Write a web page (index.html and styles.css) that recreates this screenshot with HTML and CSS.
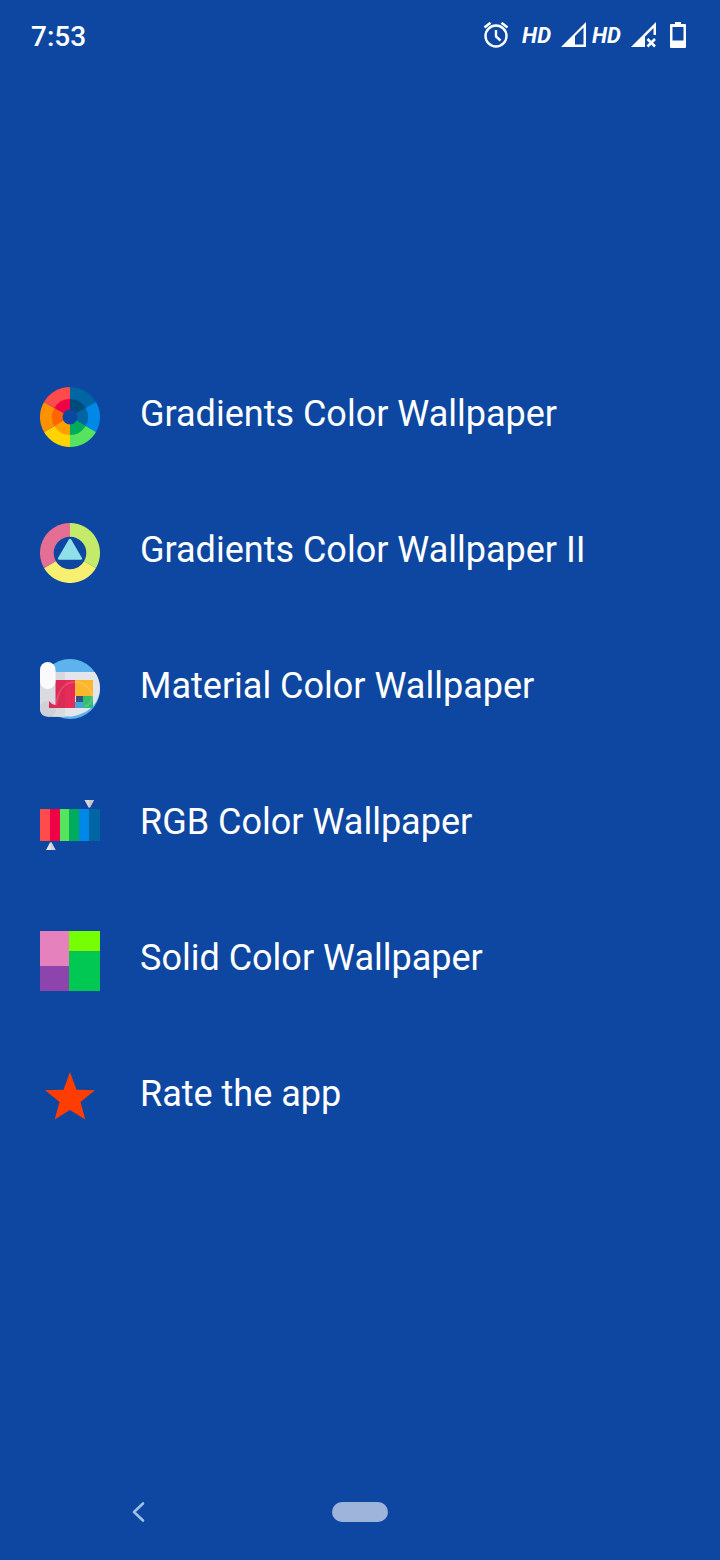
FILE: index.html
```html
<!DOCTYPE html>
<html lang="en">
<head>
  <meta charset="UTF-8">
  <meta name="viewport" content="width=device-width, initial-scale=1.0">
  <title>Color Wallpaper</title>
  <link rel="stylesheet" href="styles.css">
</head>
<body>
  <header class="status-bar">
    <span class="clock">7:53</span>
    <div class="status-icons">
      <svg class="alarm" width="28" height="28" viewBox="0 0 28 28" fill="none" stroke="#fff">
        <circle cx="14" cy="15" r="10.500" stroke-width="2.400"/>
        <path d="M14 9v6.500l4.500 4" stroke-width="2.400"/>
        <path d="M2.500 6.500l6-4.800M25.500 6.500l-6-4.800" stroke-width="2.600"/>
      </svg>
      <span class="hd">HD</span>
      <svg class="signal" width="26" height="26" viewBox="0 0 26 26">
        <path d="M0 25L25 0v25z" fill="#fff"/>
        <path d="M14 14L22.500 5.500v17H14z" fill="#0d47a1"/>
      </svg>
      <span class="hd">HD</span>
      <svg class="signal" width="26" height="26" viewBox="0 0 26 26">
        <path d="M0 25L25 0v13h-2.500V6L14 14.500V25z" fill="#fff"/>
        <path d="M16.500 17l7.500 7.500M24 17l-7.500 7.500" stroke="#fff" stroke-width="2.600"/>
      </svg>
      <svg class="battery" width="16" height="26" viewBox="0 0 16 26">
        <path d="M5 0h6v2h4a1 1 0 0 1 1 1v22a1 1 0 0 1-1 1H1a1 1 0 0 1-1-1V3a1 1 0 0 1 1-1h4z" fill="#fff"/>
        <path d="M2.500 5h11v13.500h-11z" fill="#0d47a1"/>
      </svg>
    </div>
  </header>

  <main class="menu">
    <button class="menu-item" type="button">
      <svg class="icon" viewBox="0 0 60 60">
        <path d="M30 30V0A30 30 0 0 1 56 15z" fill="#0065a3"/>
        <path d="M30 30L56 15A30 30 0 0 1 56 45z" fill="#0088e8"/>
        <path d="M30 30L56 45A30 30 0 0 1 30 60z" fill="#56e35d"/>
        <path d="M30 30V60A30 30 0 0 1 4 45z" fill="#ffd400"/>
        <path d="M30 30L4 45A30 30 0 0 1 4 15z" fill="#ff9100"/>
        <path d="M30 30L4 15A30 30 0 0 1 30 0z" fill="#ff4b4b"/>
        <path d="M30 30V12A18 18 0 0 1 45.600 21z" fill="#004b7c"/>
        <path d="M30 30L45.600 21A18 18 0 0 1 45.600 39z" fill="#0065a3"/>
        <path d="M30 30L45.600 39A18 18 0 0 1 30 48z" fill="#00ac5b"/>
        <path d="M30 30V48A18 18 0 0 1 14.400 39z" fill="#ff9f00"/>
        <path d="M30 30L14.400 39A18 18 0 0 1 14.400 21z" fill="#ff6500"/>
        <path d="M30 30L14.400 21A18 18 0 0 1 30 12z" fill="#f00045"/>
        <circle cx="30" cy="30" r="7.500" fill="#0d47a1"/>
      </svg>
      <span class="label">Gradients Color Wallpaper</span>
    </button>

    <button class="menu-item" type="button">
      <svg class="icon" viewBox="0 0 60 60">
        <path d="M30 30V0A30 30 0 0 1 56 45z" fill="#c3ea68"/>
        <path d="M30 30L56 45A30 30 0 0 1 4 45z" fill="#f6ef70"/>
        <path d="M30 30L4 45A30 30 0 0 1 30 0z" fill="#e56f94"/>
        <circle cx="30" cy="30" r="16.300" fill="#0d47a1"/>
        <path d="M28.800 16.600q1.200-1.600 2.400 0L42 35q.6 1.700-1 1.700H19q-1.600 0-1-1.700z" fill="#8fdfe8"/>
      </svg>
      <span class="label">Gradients Color Wallpaper II</span>
    </button>

    <button class="menu-item" type="button">
      <svg class="icon" viewBox="0 0 60 60">
        <circle cx="30" cy="30" r="30" fill="#5db3ed"/>
        <path d="M12 13H54.700C59 19 61 26 59.500 34C57 47 46 55 32 57.500H8z" fill="#e4e5ea"/>
        <path d="M15 13h10v44.500H12z" fill="#d6d8de"/>
        <path d="M15 21h20v28H15z" fill="#e52b58"/>
        <path d="M15 21h10v28H15z" fill="#dc2a56"/>
        <path d="M35 21h18v16H35z" fill="#fbb62d"/>
        <path d="M43 37h10v12H43z" fill="#35bd72"/>
        <path d="M35 43h8v6h-8z" fill="#43a6dd"/>
        <path d="M36 37h7v6h-7z" fill="#34517f"/>
        <path d="M16 46C18 31 25 23 35 23c9 0 17 7 17 15 0 6-4 9-8 9" fill="none" stroke="#fff" stroke-opacity=".14" stroke-width="2"/>
        <path d="M0 12h15.500v38L25 49v8.500H7a7 7 0 0 1-7-7z" fill="#d9dbe1"/>
        <path d="M0 48q1-6 8-6c5 0 8 4 8 8 0 5-3 7.500-8 7.500-5 0-8-3.500-8-9.500z" fill="#cfd1d7"/>
        <path d="M9 42q3 4 7 4v3H9z" fill="#dc2a56"/>
        <rect x="0" y="3" width="15.500" height="27" rx="7.700" fill="#fafafa"/>
      </svg>
      <span class="label">Material Color Wallpaper</span>
    </button>

    <button class="menu-item" type="button">
      <svg class="icon" viewBox="0 0 60 60">
        <path d="M0 14h10v32H0z" fill="#ff4b4b"/>
        <path d="M10 14h10v32H10z" fill="#f00045"/>
        <path d="M20 14h9v32h-9z" fill="#56e35d"/>
        <path d="M29 14h10v32H29z" fill="#00ac5b"/>
        <path d="M39 14h10v32H39z" fill="#0088e8"/>
        <path d="M49 14h11v32H49z" fill="#0065a3"/>
        <path d="M44.500 5h9.500L50 12.500h-1.500z" fill="#d9d9d9"/>
        <path d="M49.300 5H54L50 12.500h-.7z" fill="#c2c5cb"/>
        <path d="M10 47.500h1.500L15.500 55H6z" fill="#e4e4e4"/>
        <path d="M10.700 47.500h.8L15.500 55h-4.800z" fill="#cfd1d7"/>
      </svg>
      <span class="label">RGB Color Wallpaper</span>
    </button>

    <button class="menu-item" type="button">
      <svg class="icon" viewBox="0 0 60 60">
        <path d="M0 0h29v35H0z" fill="#e582bd"/>
        <path d="M0 35h29v25H0z" fill="#8e44ad"/>
        <path d="M29 0h31v20.500H29z" fill="#76ff03"/>
        <path d="M29 20.500h31V60H29z" fill="#00c853"/>
      </svg>
      <span class="label">Solid Color Wallpaper</span>
    </button>

    <button class="menu-item" type="button">
      <svg class="icon" viewBox="0 0 60 60">
        <path d="M30 5L36.500 22.800 55 23.300 40.500 35 45.300 52.500 30 43 14.700 52.500 19.500 35 5 23.300 23.500 22.800z" fill="#ff3d00"/>
      </svg>
      <span class="label">Rate the app</span>
    </button>
  </main>

  <nav class="nav-bar">
    <button class="nav-button" type="button" aria-label="Back">
      <svg width="14" height="22" viewBox="0 0 14 22" fill="none" stroke="#9fc0e6" stroke-width="2.600" stroke-linecap="round" stroke-linejoin="round">
        <path d="M12 2.500L3 11l9 8.500"/>
      </svg>
    </button>
    <button class="nav-button" type="button" aria-label="Home">
      <span class="home-pill"></span>
    </button>
  </nav>
</body>
</html>
```
FILE: styles.css
```css
:root {
  --bg: #0d47a1;
  --text: #ffffff;
  --pill: #9fb4db;
  --font-sans: Roboto, sans-serif;
}

* {
  box-sizing: border-box;
}

body {
  display: flex;
  flex-direction: column;
  min-height: 100vh;
  margin: 0;
  background-color: var(--bg);
  color: var(--text);
  font-family: var(--font-sans);
}

button {
  padding: 0;
  border: none;
  background: none;
  color: inherit;
  font: inherit;
  cursor: pointer;
}

svg {
  display: block;
}

.status-bar {
  display: flex;
  align-items: center;
  justify-content: space-between;
  height: 72px;
  padding: 0 34px 0 31px;
}

.clock {
  font-size: 28px;
  font-weight: 500;
}

.status-icons {
  display: flex;
  align-items: center;
  padding-bottom: 2px;
}

.hd {
  margin: 0 10px 0 12px;
  font-size: 22px;
  font-style: italic;
  font-weight: 700;
}

.signal + .hd {
  margin-left: 5px;
}

.battery {
  margin-left: 13px;
}

.menu {
  display: flex;
  flex: 1;
  flex-direction: column;
  justify-content: center;
  padding-bottom: 22px;
}

.menu-item {
  display: flex;
  align-items: center;
  gap: 40px;
  padding: 38px 40px;
  text-align: left;
}

.icon {
  flex: none;
  width: 60px;
  height: 60px;
}

.label {
  padding-bottom: 6px;
  font-size: 36px;
  line-height: 42px;
}

.nav-bar {
  display: grid;
  grid-template-columns: 5fr 3fr 5fr;
  height: 96px;
}

.nav-button {
  display: flex;
  align-items: center;
  justify-content: center;
}

.home-pill {
  width: 56px;
  height: 20px;
  border-radius: 10px;
  background-color: var(--pill);
}
```
